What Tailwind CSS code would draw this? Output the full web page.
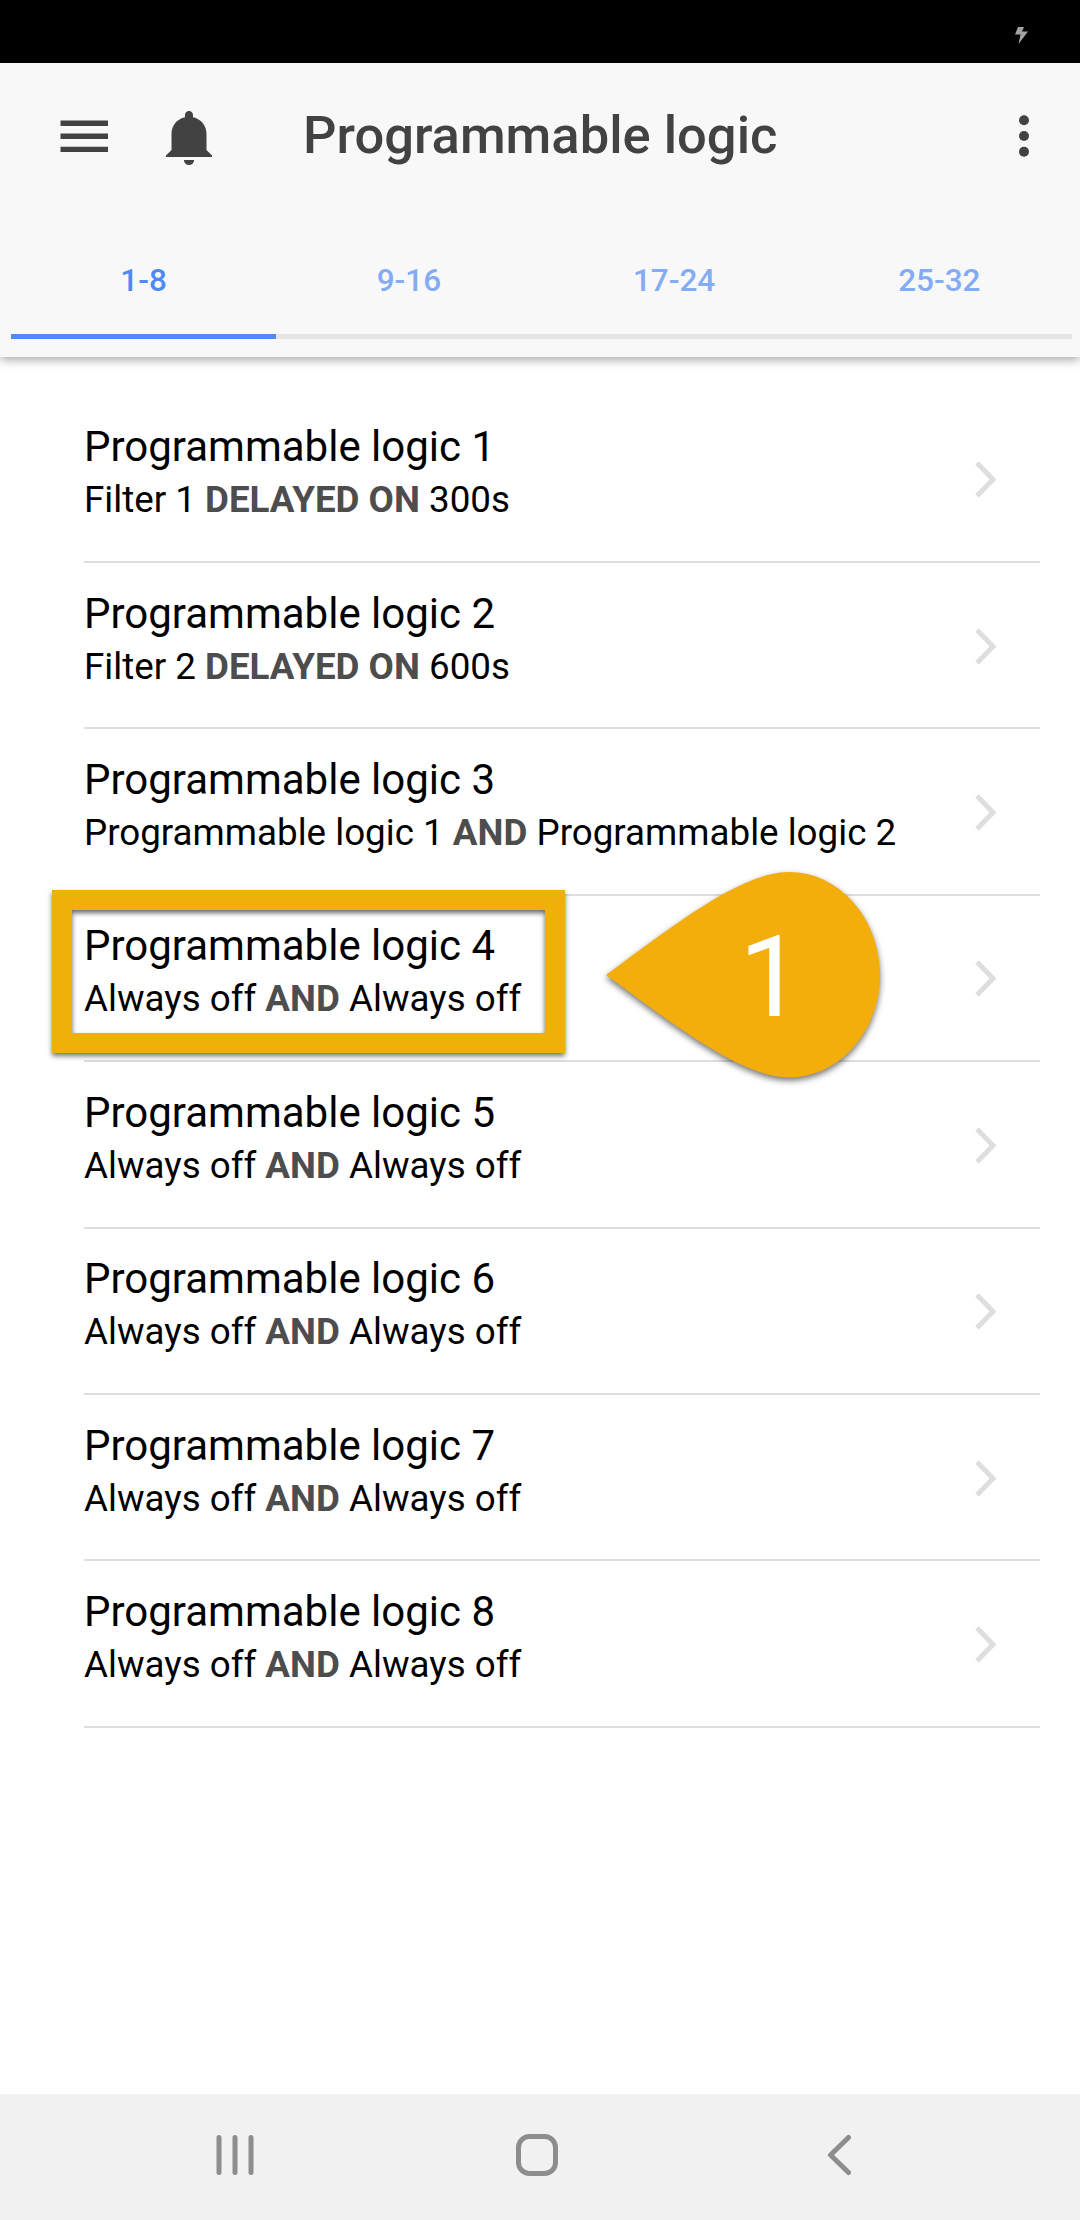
<!DOCTYPE html>
<html lang="en">

<head>
    <meta charset="UTF-8">
    <meta name="viewport" content="width=device-width, initial-scale=1.0">
    <title>Programmable logic</title>
    <script src="https://cdn.jsdelivr.net/npm/@tailwindcss/browser@4"></script>
    <script>
        const rules = [
            ["Filter 1", "DELAYED ON", "300s"],
            ["Filter 2", "DELAYED ON", "600s"],
            ["Programmable logic 1", "AND", "Programmable logic 2"],
            ["Always off", "AND", "Always off"],
            ["Always off", "AND", "Always off"],
            ["Always off", "AND", "Always off"],
            ["Always off", "AND", "Always off"],
            ["Always off", "AND", "Always off"],
        ];

        function renderRules() {
            const list = document.getElementById("rules");
            rules.forEach(([left, operator, right], i) => {
                list.innerHTML += `
                    <li class="flex h-[166.4px] items-center justify-between border-b-2 border-[#dedede] pr-11">
                        <div class="whitespace-nowrap pb-[11px]">
                            <h2 class="text-[42px] leading-[53px]">Programmable logic ${i + 1}</h2>
                            <p class="text-[36.75px] leading-[53px]">${left} <b class="font-bold text-[#4d4d4d]">${operator}</b> ${right}</p>
                        </div>
                        <svg class="mt-[2px] h-[37px] w-[21px]" viewBox="0 0 21 37" fill="none" stroke="#dedede" stroke-width="5">
                            <path d="M2 2l16 16.500l-16 16.500" />
                        </svg>
                    </li>
                `;
            });
        }

        document.addEventListener("DOMContentLoaded", renderRules);
    </script>
</head>

<body class="bg-white font-[Roboto,sans-serif] text-black">
    <div class="relative flex h-[2220px] w-[1080px] flex-col overflow-hidden">
        <!-- Status bar -->
        <div class="flex h-[63px] shrink-0 justify-end bg-black pt-[27px] pr-[52px]">
            <svg class="h-[17px] w-[13px]" viewBox="0 0 13 17" fill="#a3a3a3">
                <path d="M3 0h6L7 4.500h6L3.500 17L5.500 7.500H0z" />
            </svg>
        </div>

        <!-- Toolbar and tabs -->
        <header class="flex h-[294px] shrink-0 flex-col bg-[#f8f8f8] shadow-[0_2px_10px_rgba(0,0,0,0.4)]">
            <div class="flex h-[146px] items-center pl-[60px] pr-[51px] text-[#424242]">
                <svg class="h-8 w-12" viewBox="0 0 48 32" fill="currentColor">
                    <path d="M.5 .5h47.500v5.500h-47.500zM.5 13.500h47.500v5.500h-47.500zM.5 26.700h47.500v5.300h-47.500z" />
                </svg>
                <svg class="ml-[58px] mt-1 h-[54px] w-[46px]" viewBox="0 0 46 54" fill="currentColor">
                    <path d="M23 0c-2.300 0-4 1.700-4 4v2.300C11 8 5.500 14.500 5.500 23v16L0 44.500V46h46v-1.500L40.500 39V23C40.500 14.500 35 8 27 6.300V4c0-2.300-1.700-4-4-4zM17.800 49c.3 3 2.400 5 5.200 5s4.900-2 5.200-5z" />
                </svg>
                <h1 class="ml-[91px] flex-1 pb-[2px] text-[52.5px] font-medium">Programmable logic</h1>
                <svg class="h-[42px] w-[10px]" viewBox="0 0 10 42" fill="currentColor">
                    <circle cx="5" cy="5.300" r="5" />
                    <circle cx="5" cy="21" r="5" />
                    <circle cx="5" cy="36.700" r="5" />
                </svg>
            </div>
            <nav class="mx-[11px] mr-2 grid h-[130px] grid-cols-4 text-center text-[31.5px] leading-[106px] font-medium text-[#83acf4]">
                <a class="border-b-[5px] border-[#4f8af4] pt-[19px] text-[#4f8af4]">1-8</a>
                <a class="border-b-[5px] border-[#e5e5e5] pt-[19px]">9-16</a>
                <a class="border-b-[5px] border-[#e5e5e5] pt-[19px]">17-24</a>
                <a class="border-b-[5px] border-[#e5e5e5] pt-[19px]">25-32</a>
            </nav>
        </header>

        <main class="flex-1 pt-[39.6px] pr-10 pl-[84px]">
            <ul id="rules"></ul>
        </main>

        <!-- Highlight round the fourth rule -->
        <div class="absolute top-[890px] left-[52px] h-[163px] w-[513px] border-[20px] border-[#f0b00a] shadow-[0_3px_5px_rgba(0,0,0,0.55),inset_0_3px_5px_rgba(0,0,0,0.6)]"></div>

        <!-- Step marker -->
        <div class="absolute top-[872px] left-[606px] flex h-[206px] w-[274px] items-center">
            <svg class="absolute inset-0 overflow-visible drop-shadow-[0_3px_3px_rgba(0,0,0,0.55)]" width="274" height="206" viewBox="0 0 274 206" fill="#f4ae0c">
                <path d="M0 103C62 58 134 0 183 0C233 0 274 46 274 103S233 205.500 183 205.500C134 205.500 62 148 0 103z" />
            </svg>
            <span class="relative ml-[133px] pt-[4px] text-[114px] leading-none text-white">1</span>
        </div>

        <!-- Android navigation -->
        <footer class="flex h-[126px] shrink-0 items-center bg-[#f1f1f1] pb-[4px] pl-[216px] text-[#8d8d8d]">
            <svg class="h-[42px] w-[38px]" viewBox="0 0 38 42" fill="none" stroke="currentColor" stroke-width="5" stroke-linecap="round">
                <path d="M3 3.500v35M19 3.500v35M35 3.500v35" />
            </svg>
            <svg class="ml-[262px] h-[42px] w-[42px]" viewBox="0 0 42 42" fill="none" stroke="currentColor" stroke-width="5">
                <rect x="2.500" y="2.500" width="37" height="37" rx="11" />
            </svg>
            <svg class="ml-[269px] h-[42px] w-[24px]" viewBox="0 0 24 42" fill="none" stroke="currentColor" stroke-width="5" stroke-linecap="round" stroke-linejoin="round">
                <path d="M21.500 3.500L3.500 21l18 17.500" />
            </svg>
        </footer>
    </div>
</body>

</html>
